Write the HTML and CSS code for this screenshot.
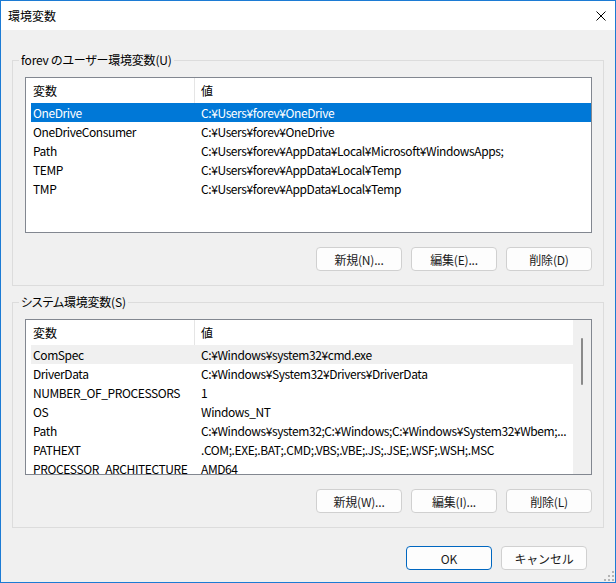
FILE: index.html
```html
<!DOCTYPE html>
<html lang="ja">

<head>
    <meta charset="UTF-8">
    <title>環境変数</title>
    <link rel="stylesheet" href="styles.css">
</head>

<body>
<div class="window">
    <div class="titlebar">
        <span class="title">環境変数</span>
        <svg class="close" width="10" height="10" viewBox="0 0 10 10">
            <path d="M0.5 0.5 L9.5 9.5 M9.5 0.5 L0.5 9.5" stroke="#000" stroke-width="1" fill="none" />
        </svg>
    </div>

    <div class="content">
        <!-- User variables -->
        <fieldset class="group">
            <legend>forev のユーザー環境変数(U)</legend>
            <div class="listview">
                <div class="lv-head">
                    <span class="name">変数</span>
                    <span class="value">値</span>
                </div>
                <div class="lv-row selected"><span class="name">OneDrive</span><span class="value">C:¥Users¥forev¥OneDrive</span></div>
                <div class="lv-row"><span class="name">OneDriveConsumer</span><span class="value">C:¥Users¥forev¥OneDrive</span></div>
                <div class="lv-row"><span class="name">Path</span><span class="value">C:¥Users¥forev¥AppData¥Local¥Microsoft¥WindowsApps;</span></div>
                <div class="lv-row"><span class="name">TEMP</span><span class="value">C:¥Users¥forev¥AppData¥Local¥Temp</span></div>
                <div class="lv-row"><span class="name">TMP</span><span class="value">C:¥Users¥forev¥AppData¥Local¥Temp</span></div>
            </div>
            <div class="btn-row">
                <button class="btn">新規(N)...</button>
                <button class="btn">編集(E)...</button>
                <button class="btn">削除(D)</button>
            </div>
        </fieldset>

        <!-- System variables -->
        <fieldset class="group">
            <legend>システム環境変数(S)</legend>
            <div class="listview scrolling">
                <div class="lv-body">
                    <div class="lv-head">
                        <span class="name">変数</span>
                        <span class="value">値</span>
                    </div>
                    <div class="lv-row hover"><span class="name">ComSpec</span><span class="value">C:¥Windows¥system32¥cmd.exe</span></div>
                    <div class="lv-row"><span class="name">DriverData</span><span class="value">C:¥Windows¥System32¥Drivers¥DriverData</span></div>
                    <div class="lv-row"><span class="name">NUMBER_OF_PROCESSORS</span><span class="value">1</span></div>
                    <div class="lv-row"><span class="name">OS</span><span class="value">Windows_NT</span></div>
                    <div class="lv-row"><span class="name">Path</span><span class="value">C:¥Windows¥system32;C:¥Windows;C:¥Windows¥System32¥Wbem;...</span></div>
                    <div class="lv-row"><span class="name">PATHEXT</span><span class="value">.COM;.EXE;.BAT;.CMD;.VBS;.VBE;.JS;.JSE;.WSF;.WSH;.MSC</span></div>
                    <div class="lv-row"><span class="name">PROCESSOR_ARCHITECTURE</span><span class="value">AMD64</span></div>
                </div>
                <div class="scrollbar"><div class="thumb"></div></div>
            </div>
            <div class="btn-row">
                <button class="btn">新規(W)...</button>
                <button class="btn">編集(I)...</button>
                <button class="btn">削除(L)</button>
            </div>
        </fieldset>

        <div class="dialog-buttons">
            <button class="btn btn-primary">OK</button>
            <button class="btn">キャンセル</button>
        </div>
    </div>

    <svg class="grip" width="12" height="12" viewBox="0 0 12 12">
        <rect x="10" y="2" width="2" height="2" fill="#b4b4b4" />
        <rect x="6" y="6" width="2" height="2" fill="#b4b4b4" />
        <rect x="10" y="6" width="2" height="2" fill="#b4b4b4" />
        <rect x="2" y="10" width="2" height="2" fill="#b4b4b4" />
        <rect x="6" y="10" width="2" height="2" fill="#b4b4b4" />
        <rect x="10" y="10" width="2" height="2" fill="#b4b4b4" />
    </svg>
</div>
</body>

</html>
```

FILE: styles.css
```css
body {
    margin: 0;
    font-family: "Noto Sans CJK JP", "Noto Sans", sans-serif;
    font-size: 12px;
    font-feature-settings: "palt";
    color: #000;
}

.window {
    position: relative;
    width: 616px;
    height: 583px;
    box-sizing: border-box;
    border: 1px solid #1c7bd4;
    background: #f0f0f0;
    overflow: hidden;
}

.titlebar {
    height: 29px;
    background: #fff;
    display: flex;
    align-items: center;
    justify-content: space-between;
    padding: 0 9px 0 7px;
}

.close {
    display: block;
}

.content {
    padding: 22px 11px 0;
}

.group {
    margin: 0;
    min-width: 0;
    padding: 9px 11px 14px 12px;
    border: 1px solid #dcdcdc;
}

.group + .group {
    margin-top: 8px;
}

.group legend {
    padding: 0 2px;
    margin-left: -6px;
    line-height: 16px;
    letter-spacing: -0.2px;
}

.listview {
    height: 156px;
    box-sizing: border-box;
    border: 1px solid #828790;
    background: #fff;
    overflow: hidden;
}

.listview.scrolling {
    display: flex;
}

.lv-body {
    flex: 1;
    min-width: 0;
}

.lv-head,
.lv-row {
    display: grid;
    grid-template-columns: 164px 1fr;
    margin-left: 5px;
    white-space: nowrap;
}

.lv-head {
    height: 25px;
    line-height: 25px;
}

.lv-head .name {
    border-right: 1px solid #e5e5e5;
}

.lv-row {
    height: 19px;
    line-height: 19px;
    letter-spacing: -0.4px;
}

.name {
    padding-left: 2px;
    overflow: hidden;
}

.value {
    padding-left: 6px;
    overflow: hidden;
}

.lv-row.selected {
    background: #0078d7;
    color: #fff;
}

.lv-row.hover {
    background: #f0f0f0;
}

.scrollbar {
    width: 18px;
    background: #f0f0f0;
}

.thumb {
    width: 2px;
    height: 47px;
    margin: 18px auto 0;
    background: #8a8a8a;
    border-radius: 1px;
}

.btn-row {
    display: flex;
    justify-content: flex-end;
    gap: 9px;
    margin-top: 14px;
}

.btn {
    width: 86px;
    height: 24px;
    box-sizing: border-box;
    padding: 0;
    border: 1px solid #d0d0d0;
    border-radius: 4px;
    background: #fdfdfd;
    font-family: inherit;
    font-size: 12px;
    color: #1b1b1b;
    letter-spacing: -0.2px;
}

.btn-primary {
    border-color: #0067c0;
}

.dialog-buttons {
    display: flex;
    justify-content: flex-end;
    gap: 9px;
    margin: 18px 17px 0 0;
}

.grip {
    position: absolute;
    right: 1px;
    bottom: 1px;
}
```
